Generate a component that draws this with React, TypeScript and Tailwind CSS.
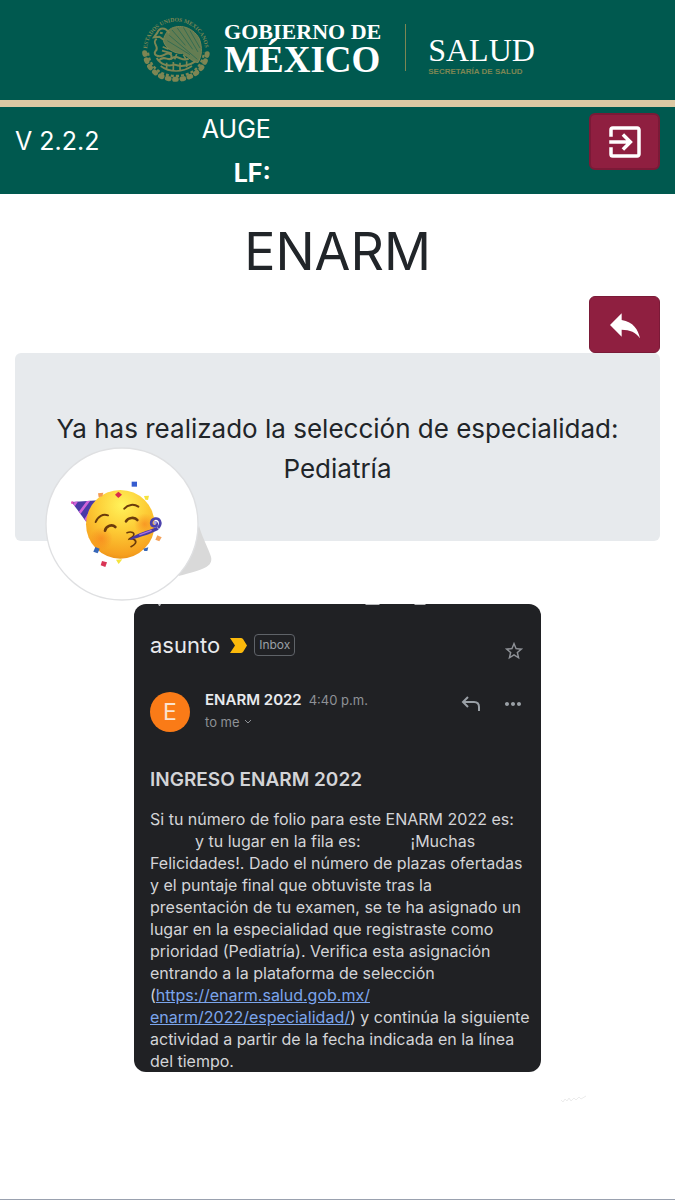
import { MdExitToApp, MdMoreHoriz, MdReply, MdStarOutline } from 'react-icons/md';

function Crest() {
  return (
    <svg viewBox="0 0 216 216" className="size-[72px] shrink-0" fill="none" stroke="#7d8653">
      <defs>
        <path id="crest-arc" d="M21 116 A87 87 0 1 1 195 116" />
      </defs>
      <text fill="#7d8653" stroke="none" fontSize="17" fontWeight="700" fontFamily="Liberation Serif, serif">
        <textPath href="#crest-arc" startOffset="6">ESTADOS UNIDOS MEXICANOS</textPath>
      </text>
      {/* Laurel and oak garland */}
      <path d="M14 122 C20 172 58 202 108 202 S196 172 202 122" strokeWidth="15" strokeDasharray="5 17" strokeLinecap="round" />
      <path d="M24 122 C30 168 64 192 108 192 S186 168 192 122" strokeWidth="7" strokeDasharray="9 6" />
      {/* Eagle wings */}
      <path d="M84 56 C108 34 156 40 178 80 C188 108 186 132 174 152 C158 150 146 136 128 124 C108 126 84 114 74 96 C66 84 74 68 84 56Z" fill="#7d8653" fillOpacity=".8" strokeWidth="3" />
      <path d="M96 54 L136 100 M112 48 L158 112 M130 46 L174 120 M150 56 L180 108 M88 70 L172 142 M82 86 L150 128" stroke="#1d6351" strokeWidth="2" />
      <path d="M88 64 C76 44 58 46 52 62 L42 76 L58 74 L72 84 M60 62 L68 64" strokeWidth="6" />
      <path d="M50 80 C32 94 62 104 46 118 C38 130 58 138 74 128 C88 120 100 128 92 142" strokeWidth="6" />
      {/* Cactus and lake */}
      <path d="M58 144 C74 128 84 150 98 138 C112 126 128 152 146 140 M50 138 C62 158 84 164 104 158 C124 166 150 160 166 148" strokeWidth="6" />
      <path d="M62 162 C88 182 128 182 156 162 M80 152 V170 M100 150 V174 M120 152 V174 M140 148 V166" strokeWidth="5" />
      <path d="M68 104 L86 112 M66 116 L96 124 M110 126 L104 142 M130 128 L138 142" strokeWidth="5" />
    </svg>
  );
}

function PartySticker() {
  return (
    <svg viewBox="0 0 600 520" className="absolute top-[77px] left-[15px] w-[200px]" role="img" aria-label="Celebración">
      <defs>
        <radialGradient id="face" cx=".52" cy=".22" r=".85">
          <stop offset="0" stopColor="#fff35a" />
          <stop offset=".45" stopColor="#fdcb35" />
          <stop offset=".85" stopColor="#f6a01f" />
          <stop offset="1" stopColor="#e08612" />
        </radialGradient>
        <radialGradient id="cheek">
          <stop offset="0" stopColor="#f77c1b" stopOpacity=".6" />
          <stop offset="1" stopColor="#f77c1b" stopOpacity="0" />
        </radialGradient>
        <clipPath id="hat">
          <path d="M125 216 L218 210 L169 276Z" />
        </clipPath>
      </defs>
      <path d="M507 288 C518 325 534 353 543 380 C550 410 520 419 445 438Z" fill="#d9d9d9" />
      <circle cx="276" cy="282" r="228" fill="#fff" stroke="#dfe0e2" strokeWidth="4" />
      <g clipPath="url(#hat)">
        <rect x="120" y="205" width="100" height="75" fill="#4a3aa8" />
        <path d="M122 240 L146 205 M142 258 L182 204 M160 280 L208 204" stroke="#cf63d8" strokeWidth="8" />
      </g>
      <circle cx="127" cy="218" r="4" fill="#e250b9" />
      <circle cx="271" cy="283" r="103" fill="url(#face)" />
      <circle cx="214" cy="326" r="34" fill="url(#cheek)" />
      <circle cx="344" cy="282" r="32" fill="url(#cheek)" />
      <g fill="none" stroke="#6b3b0b" strokeLinecap="round">
        <path d="M197 276 C204 258 219 251 234 256" strokeWidth="6" />
        <path d="M283 236 C294 223 312 221 325 230" strokeWidth="6" />
        <path d="M225 302 C228 286 247 282 256 291" strokeWidth="8" />
        <path d="M288 274 C294 263 314 260 322 270" strokeWidth="8" />
        <path d="M291 308 C304 303 316 308 310 318 C306 324 299 325 298 327 C310 324 321 332 316 340 C313 345 307 348 303 350" strokeWidth="5" />
      </g>
      <path d="M300 326 C326 306 352 304 380 291 L386 299 C355 315 333 319 302 330Z" fill="#493ba6" />
      <path d="M328 315 L365 301" stroke="#ad70df" strokeWidth="4" />
      <path d="M384 294 C398 278 388 263 374 266 C360 270 360 289 374 289 C382 288 383 277 374 277" fill="none" stroke="#4c43ad" strokeWidth="8" />
      <circle cx="375" cy="278" r="5" fill="#a9a4e6" />
      <rect x="305" y="155" width="16" height="15" fill="#355ccf" />
      <path d="M265 185 L276 194 L265 204 L255 194Z" fill="#d92c4c" />
      <path d="M204 190 L220 188 L217 199 L206 202Z" fill="#f39b52" />
      <path d="M342 198 L357 197 L354 210 L346 209Z" fill="#f5e33d" />
      <path d="M382 316 L395 322 L388 334 L376 329Z" fill="#f4a25b" />
      <path d="M196 351 L209 356 L203 370 L190 365Z" fill="#3767b8" />
      <path d="M340 356 L355 352 L352 363 L343 363Z" fill="#3767b8" />
      <path d="M216 393 L231 397 L226 411 L212 406Z" fill="#d93455" />
      <path d="M258 389 L277 388 L266 402Z" fill="#f5e33d" />
    </svg>
  );
}

function Header() {
  return (
    <header className="bg-[#00594f] text-white">
      <div className="flex h-[100px] items-start justify-center font-['Liberation_Serif',serif]">
        <div className="flex pt-3">
          <Crest />
          <div className="ml-3 flex flex-col pt-2 font-bold">
            <span className="text-[22px] leading-6">GOBIERNO DE</span>
            <span className="text-[37px] leading-8">MÉXICO</span>
          </div>
          <div className="mt-3 ml-6 h-[47px] w-px bg-[#7d8653]" />
          <div className="ml-[22px] flex flex-col pt-5">
            <span className="text-[32px] leading-9">SALUD</span>
            <span className="font-['Liberation_Sans',sans-serif] text-[8px] leading-2 font-bold text-[#7d8653]">
              SECRETARÍA DE SALUD
            </span>
          </div>
        </div>
      </div>
      <div className="h-[7px] bg-[#dcc9a4]" />
      <div className="flex h-[87px] px-[15px] text-[25px] leading-[44px]">
        <span className="w-1/6 pt-3 whitespace-nowrap">V 2.2.2</span>
        <div className="flex w-[23%] flex-col items-end">
          <span>AUGE</span>
          <span className="font-bold">LF:</span>
        </div>
        <button
          type="button"
          aria-label="Salir"
          className="mt-[6px] ml-auto flex h-[57px] w-[71px] items-center justify-center rounded-md border-2 border-[#7a1a37] bg-[#8f1f40]"
        >
          <MdExitToApp className="size-[42px]" />
        </button>
      </div>
    </header>
  );
}

function Email() {
  return (
    <article className="relative mx-auto mt-[63px] w-full max-w-[407px] overflow-hidden rounded-xl bg-[#202124] px-4 pt-[25px] text-[#d3d4d7]">
      <svg viewBox="0 0 407 2" className="absolute top-0 left-0 w-full" fill="#b9babc">
        <path d="M24 0h3l-1 2h-1z M231 0h15l-1 1h-13z M280 0h12l-1 1h-10z" />
      </svg>
      <div className="flex h-8 items-center">
        <h2 className="text-[22px] leading-7 text-[#e8eaed]">asunto</h2>
        <svg viewBox="0 0 17 15" className="ml-[10px] w-[17px]">
          <path d="M0 0h11q1 0 2 1l4 6.500-4 6.500q-1 1-2 1H0l5-7.500z" fill="#fbb90b" />
        </svg>
        <span className="ml-[7px] rounded border border-[#5f6368] px-1 text-[12px] leading-5 text-[#9aa0a6]">Inbox</span>
        <button type="button" aria-label="Destacar" className="mt-3 ml-auto text-[#8e9196]">
          <MdStarOutline className="size-[22px]" />
        </button>
      </div>
      <div className="mt-[27px] flex">
        <div className="mt-1 flex size-10 items-center justify-center rounded-full bg-[#fa7b17] text-[23px] text-[#fbe3d0]">E</div>
        <div className="ml-[15px]">
          <div className="flex items-center gap-[7px] leading-6">
            <span className="text-[15px] font-semibold text-[#e8eaed]">ENARM 2022</span>
            <span className="text-[13px] text-[#8e9196]">4:40 p.m.</span>
          </div>
          <button type="button" className="flex items-center gap-1 text-[13px] leading-5 text-[#8e9196]">
            to me
            <svg viewBox="0 0 8 6" className="w-2" fill="none" stroke="currentColor">
              <path d="M1 1l3 3 3-3" />
            </svg>
          </button>
        </div>
        <div className="mt-[6px] ml-auto flex h-5 items-center gap-5 text-[#9aa0a6]">
          <button type="button" aria-label="Responder">
            <svg viewBox="0 0 20 16" className="w-5" fill="none" stroke="currentColor" strokeWidth="2">
              <path d="M7 1L2 6l5 5M2 6h11c3 0 5 2 5 5v4" />
            </svg>
          </button>
          <button type="button" aria-label="Más opciones">
            <MdMoreHoriz className="size-6" />
          </button>
        </div>
      </div>
      <h3 className="mt-[34px] text-[19px] leading-7 font-semibold">INGRESO ENARM 2022</h3>
      <p className="mt-[14px] text-[16px] leading-[22px] whitespace-nowrap">
        Si tu número de folio para este ENARM 2022 es:
        <br />
        <span className="inline-block w-[45px]" />y tu lugar en la fila es:
        <span className="inline-block w-[50px]" />¡Muchas
        <br />
        Felicidades!. Dado el número de plazas ofertadas
        <br />
        y el puntaje final que obtuviste tras la
        <br />
        presentación de tu examen, se te ha asignado un
        <br />
        lugar en la especialidad que registraste como
        <br />
        prioridad (Pediatría). Verifica esta asignación
        <br />
        entrando a la plataforma de selección
        <br />(
        <a href="https://enarm.salud.gob.mx/enarm/2022/especialidad/" className="text-[#7ba5ec] underline">
          https://enarm.salud.gob.mx/
          <br />
          enarm/2022/especialidad/
        </a>
        ) y continúa la siguiente
        <br />
        actividad a partir de la fecha indicada en la línea
        <br />
        del tiempo.
      </p>
    </article>
  );
}

export default function App() {
  return (
    <div className="min-h-screen border-b border-gray-400 bg-white font-['Inter',sans-serif] text-[#212529]">
      <Header />
      <main className="px-[15px]">
        <h1 className="pt-[26px] text-center text-[52px] leading-[64px]">ENARM</h1>
        <div className="mt-3 flex justify-end">
          <button
            type="button"
            aria-label="Regresar"
            className="flex h-[57px] w-[71px] items-center justify-center rounded-md border border-[#7a1a37] bg-[#8f1f40] text-white"
          >
            <MdReply className="size-10" />
          </button>
        </div>
        <div className="relative rounded-md bg-[#e7eaed] pt-14 pb-[52px] text-center text-[26px] leading-10">
          <p>
            Ya has realizado la selección de especialidad:
            <br />
            Pediatría
          </p>
          <PartySticker />
        </div>
        <Email />
        <svg viewBox="0 0 28 8" className="mt-[23px] mr-[72px] ml-auto w-7" fill="none" stroke="#ececec">
          <path d="M1 5l2 2 2-3 2 2 2-3 2 3 3-3 2 2 3-3 2 2 5-3" />
        </svg>
      </main>
    </div>
  );
}
